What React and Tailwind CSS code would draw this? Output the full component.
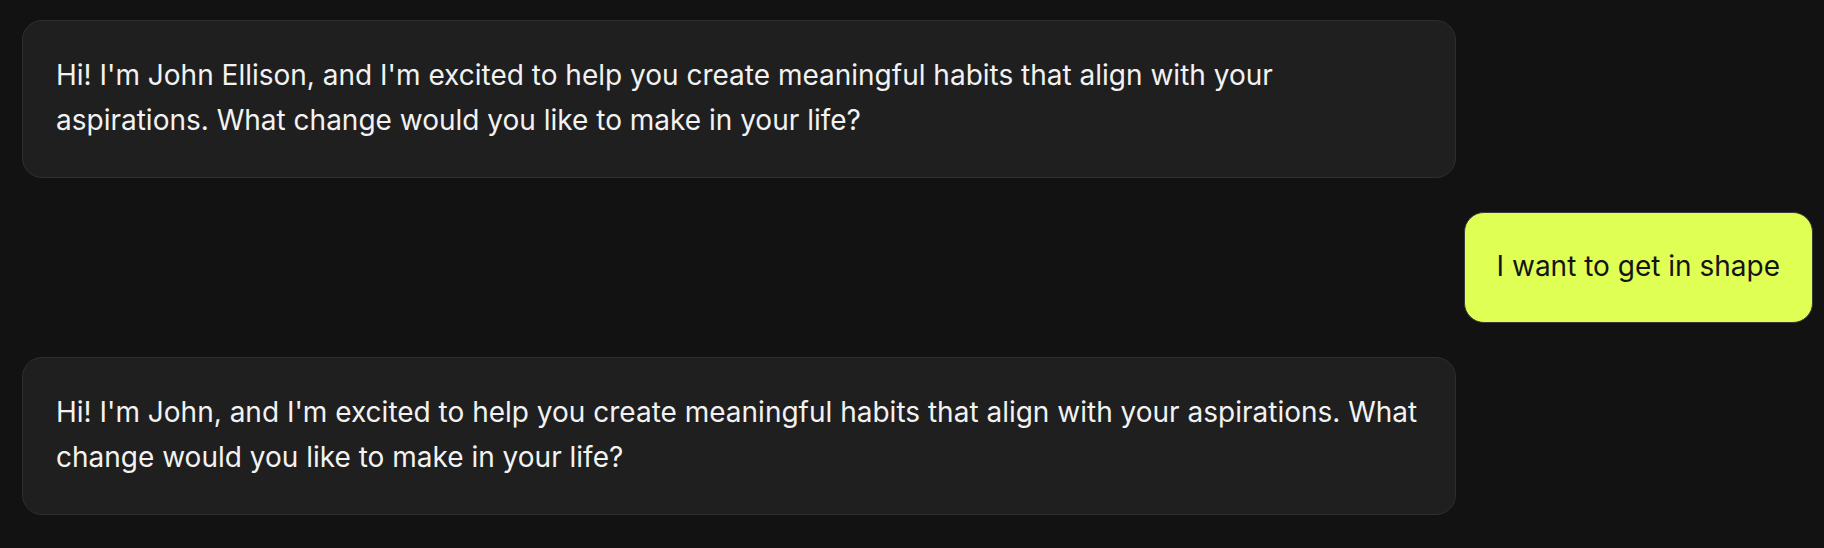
export default function App() {
  return (
    <div
      className="w-[1824px] h-[548px] bg-[#121212] pl-[22px] pr-[11px] pt-[20px] flex flex-col gap-[34px] overflow-hidden"
      style={{ fontFamily: "Inter, 'Noto Sans', sans-serif" }}
    >
      <div className="self-start w-[1434px] rounded-[20px] border border-[#2f2f2f] bg-[#1f1f1f] px-[33px] pt-[32px] pb-[34px] text-[28px] leading-[45px] text-[#f2f2f2]">
        Hi! I'm John Ellison, and I'm excited to help you create meaningful habits that align with your aspirations. What change would you like to make in your life?
      </div>
      <div className="self-end rounded-[20px] border border-[#3a3a3a] bg-[#e0ff55] px-[32px] pt-[31px] pb-[33px] text-[28px] leading-[45px] text-[#141414]">
        I want to get in shape
      </div>
      <div className="self-start w-[1434px] rounded-[20px] border border-[#2f2f2f] bg-[#1f1f1f] px-[33px] pt-[32px] pb-[34px] text-[28px] leading-[45px] text-[#f2f2f2]">
        Hi! I'm John, and I'm excited to help you create meaningful habits that align with your aspirations. What change would you like to make in your life?
      </div>
    </div>
  );
}
